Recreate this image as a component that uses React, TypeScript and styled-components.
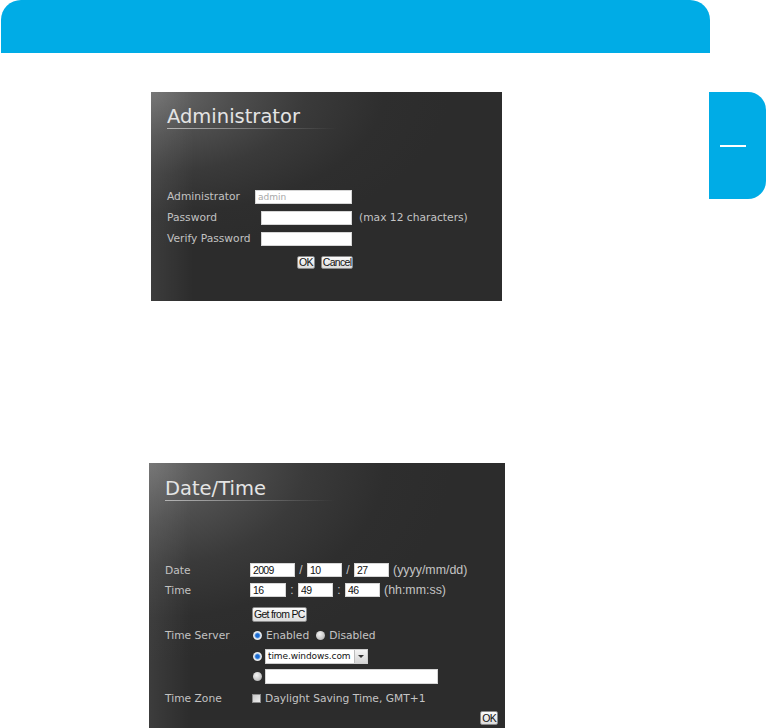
import React from "react";
import styled, { createGlobalStyle } from "styled-components";

const GlobalStyle = createGlobalStyle`
  html, body {
    margin: 0;
    padding: 0;
    background: #fff;
    overflow: hidden;
  }
  body {
    font-family: "DejaVu Sans", Verdana, sans-serif;
  }
`;

const Page = styled.div`
  width: 766px;
  height: 728px;
  overflow: hidden;
`;

const Banner = styled.div`
  width: 709px;
  height: 53px;
  margin-left: 1px;
  background: #00ace6;
  border-radius: 20px 20px 0 0;
`;

const Body = styled.div`
  display: flex;
  align-items: flex-start;
  margin-top: 39px;
`;

const Content = styled.div`
  width: 709px;
  flex: none;
  display: flex;
  flex-direction: column;
`;

const SideTab = styled.div`
  width: 57px;
  height: 107px;
  box-sizing: border-box;
  padding-left: 11px;
  display: flex;
  align-items: center;
  background: #00ace6;
  border-radius: 0 18px 18px 0;
`;

const TabDash = styled.span`
  width: 26px;
  height: 2px;
  background: #fff;
`;

const Panel = styled.section<{
  $left: number;
  $top: number;
  $width: number;
  $height: number;
  $padTop: number;
}>`
  margin-left: ${(p) => p.$left}px;
  margin-top: ${(p) => p.$top}px;
  width: ${(p) => p.$width}px;
  height: ${(p) => p.$height}px;
  box-sizing: border-box;
  padding: ${(p) => p.$padTop}px 0 0 16px;
  display: flex;
  flex-direction: column;
  color: #c2c2c2;
  background: linear-gradient(to right, rgba(255, 255, 255, 0.08), rgba(255, 255, 255, 0) 12%),
    radial-gradient(85% 75% at 0 0, #6c6c6c 0%, #4e4e4e 28%, #3a3a3a 52%, #2e2e2e 78%, #2c2c2c 100%),
    #2c2c2c;
`;

const Title = styled.h2`
  margin: 0;
  font-family: "DejaVu Sans", Verdana, sans-serif;
  font-weight: normal;
  font-size: 19.5px;
  line-height: 22px;
  color: #e4e4e4;
`;

const TitleRule = styled.div`
  width: 170px;
  height: 1px;
  background: linear-gradient(
    to right,
    #b4b4b4,
    rgba(180, 180, 180, 0.35) 60%,
    rgba(180, 180, 180, 0)
  );
`;

const Form = styled.div<{ $gap: number }>`
  margin-top: ${(p) => p.$gap}px;
  display: flex;
  flex-direction: column;
`;

const Row = styled.div<{ $h?: number; $mt?: number; $end?: boolean }>`
  display: flex;
  align-items: center;
  height: ${(p) => p.$h ?? 21}px;
  margin-top: ${(p) => p.$mt ?? 0}px;
  justify-content: ${(p) => (p.$end ? "flex-end" : "flex-start")};
  padding-right: ${(p) => (p.$end ? 7 : 0)}px;
`;

const Label = styled.span<{ $w: number }>`
  width: ${(p) => p.$w}px;
  flex: none;
  font-size: 10.7px;
  color: #c2c2c2;
  white-space: nowrap;
`;

const Field = styled.input<{ $w: number; $h?: number; $ml?: number; $muted?: boolean }>`
  width: ${(p) => p.$w}px;
  height: ${(p) => p.$h ?? 14}px;
  margin: 0 0 0 ${(p) => p.$ml ?? 0}px;
  flex: none;
  box-sizing: border-box;
  padding: 0 2px;
  background: #fff;
  border: 1px solid #d6d6d6;
  outline: none;
  font-family: ${(p) =>
    p.$muted ? '"DejaVu Sans", Verdana, sans-serif' : '"Liberation Sans", Arial, sans-serif'};
  font-size: ${(p) => (p.$muted ? 9 : 10.5)}px;
  letter-spacing: ${(p) => (p.$muted ? 0 : -0.7)}px;
  color: ${(p) => (p.$muted ? "#a8a8a8" : "#111")};
`;

const Hint = styled.span<{ $ml?: number; $sans?: boolean }>`
  margin-left: ${(p) => p.$ml ?? 4}px;
  font-family: ${(p) =>
    p.$sans ? '"Liberation Sans", Arial, sans-serif' : '"DejaVu Sans", Verdana, sans-serif'};
  font-size: ${(p) => (p.$sans ? 12.4 : 10.7)}px;
  color: #c4c4c4;
  white-space: nowrap;
`;

const Sep = styled.span`
  width: 12px;
  flex: none;
  text-align: center;
  font-family: "Liberation Sans", Arial, sans-serif;
  font-size: 12px;
  color: #c2c2c2;
`;

const Button = styled.button<{ $ml?: number; $h?: number }>`
  margin: 0 0 0 ${(p) => p.$ml ?? 0}px;
  height: ${(p) => p.$h ?? 13}px;
  padding: 0 1px;
  box-sizing: border-box;
  font-family: "Liberation Sans", Arial, sans-serif;
  font-size: 10.5px;
  line-height: 10px;
  letter-spacing: -0.7px;
  color: #111;
  background: linear-gradient(#fbfbfb, #dcdcdc);
  border: 1px solid #8a8a8a;
  border-radius: 2px;
`;

const Radio = styled.span<{ $on?: boolean; $ml?: number }>`
  width: 9px;
  height: 9px;
  flex: none;
  margin-left: ${(p) => p.$ml ?? 3}px;
  border-radius: 50%;
  background: ${(p) =>
    p.$on
      ? "radial-gradient(circle, #1d6bd0 0 28%, #7fb2ea 40%, #f2f2f2 55%, #b4b4b4 100%)"
      : "radial-gradient(circle at 40% 35%, #f4f4f4, #c6c6c6 60%, #989898)"};
`;

const Check = styled.span`
  width: 9px;
  height: 9px;
  flex: none;
  margin-left: 2px;
  box-sizing: border-box;
  border: 1px solid #8c8c8c;
  background: linear-gradient(135deg, #c8c8c8, #efefef);
`;

const Select = styled.div`
  width: 103px;
  height: 15px;
  margin-left: 3px;
  flex: none;
  box-sizing: border-box;
  display: flex;
  align-items: center;
  background: #fff;
  border: 1px solid #cfcfcf;
`;

const SelectText = styled.span`
  flex: 1;
  padding-left: 2px;
  font-size: 9px;
  letter-spacing: -0.1px;
  color: #111;
  white-space: nowrap;
  overflow: hidden;
`;

const SelectArrow = styled.span`
  width: 12px;
  height: 13px;
  flex: none;
  display: flex;
  align-items: center;
  justify-content: center;
  background: linear-gradient(#f4f4f4, #d4d4d4);
  border-left: 1px solid #bdbdbd;

  &::after {
    content: "";
    border-left: 3px solid transparent;
    border-right: 3px solid transparent;
    border-top: 3px solid #333;
  }
`;

const AdminPanel = () => (
  <Panel $left={151} $top={0} $width={351} $height={209} $padTop={14}>
    <Title>Administrator</Title>
    <TitleRule />
    <Form $gap={57}>
      <Row>
        <Label $w={88}>Administrator</Label>
        <Field $w={97} $muted defaultValue="admin" />
      </Row>
      <Row>
        <Label $w={88}>Password</Label>
        <Field $w={91} $ml={6} type="password" />
        <Hint $ml={7}>(max 12 characters)</Hint>
      </Row>
      <Row>
        <Label $w={88}>Verify Password</Label>
        <Field $w={91} $ml={6} type="password" />
      </Row>
      <Row $h={14} $mt={6}>
        <Button $ml={130} $h={13}>OK</Button>
        <Button $ml={6} $h={13}>Cancel</Button>
      </Row>
    </Form>
  </Panel>
);

const DateTimePanel = () => (
  <Panel $left={149} $top={162} $width={356} $height={265} $padTop={15}>
    <Title>Date/Time</Title>
    <TitleRule />
    <Form $gap={59}>
      <Row $h={20}>
        <Label $w={85}>Date</Label>
        <Field $w={45} $h={14} defaultValue="2009" />
        <Sep>/</Sep>
        <Field $w={35} $h={14} defaultValue="10" />
        <Sep>/</Sep>
        <Field $w={35} $h={14} defaultValue="27" />
        <Hint $sans>(yyyy/mm/dd)</Hint>
      </Row>
      <Row $h={20}>
        <Label $w={85}>Time</Label>
        <Field $w={36} $h={14} defaultValue="16" />
        <Sep>:</Sep>
        <Field $w={35} $h={14} defaultValue="49" />
        <Sep>:</Sep>
        <Field $w={35} $h={14} defaultValue="46" />
        <Hint $sans>(hh:mm:ss)</Hint>
      </Row>
      <Row $h={20} $mt={4}>
        <Label $w={85} />
        <Button $ml={2} $h={15}>Get from PC</Button>
      </Row>
      <Row $h={20} $mt={1}>
        <Label $w={85}>Time Server</Label>
        <Radio $on />
        <Hint>Enabled</Hint>
        <Radio $ml={7} />
        <Hint>Disabled</Hint>
      </Row>
      <Row $h={20} $mt={1}>
        <Label $w={85} />
        <Radio $on />
        <Select>
          <SelectText>time.windows.com</SelectText>
          <SelectArrow />
        </Select>
      </Row>
      <Row $h={20}>
        <Label $w={85} />
        <Radio />
        <Field $w={173} $h={15} $ml={3} />
      </Row>
      <Row $h={20} $mt={2}>
        <Label $w={85}>Time Zone</Label>
        <Check />
        <Hint>Daylight Saving Time, GMT+1</Hint>
      </Row>
      <Row $h={20} $end>
        <Button $h={14}>OK</Button>
      </Row>
    </Form>
  </Panel>
);

export default function App() {
  return (
    <Page>
      <GlobalStyle />
      <Banner />
      <Body>
        <Content>
          <AdminPanel />
          <DateTimePanel />
        </Content>
        <SideTab>
          <TabDash />
        </SideTab>
      </Body>
    </Page>
  );
}
